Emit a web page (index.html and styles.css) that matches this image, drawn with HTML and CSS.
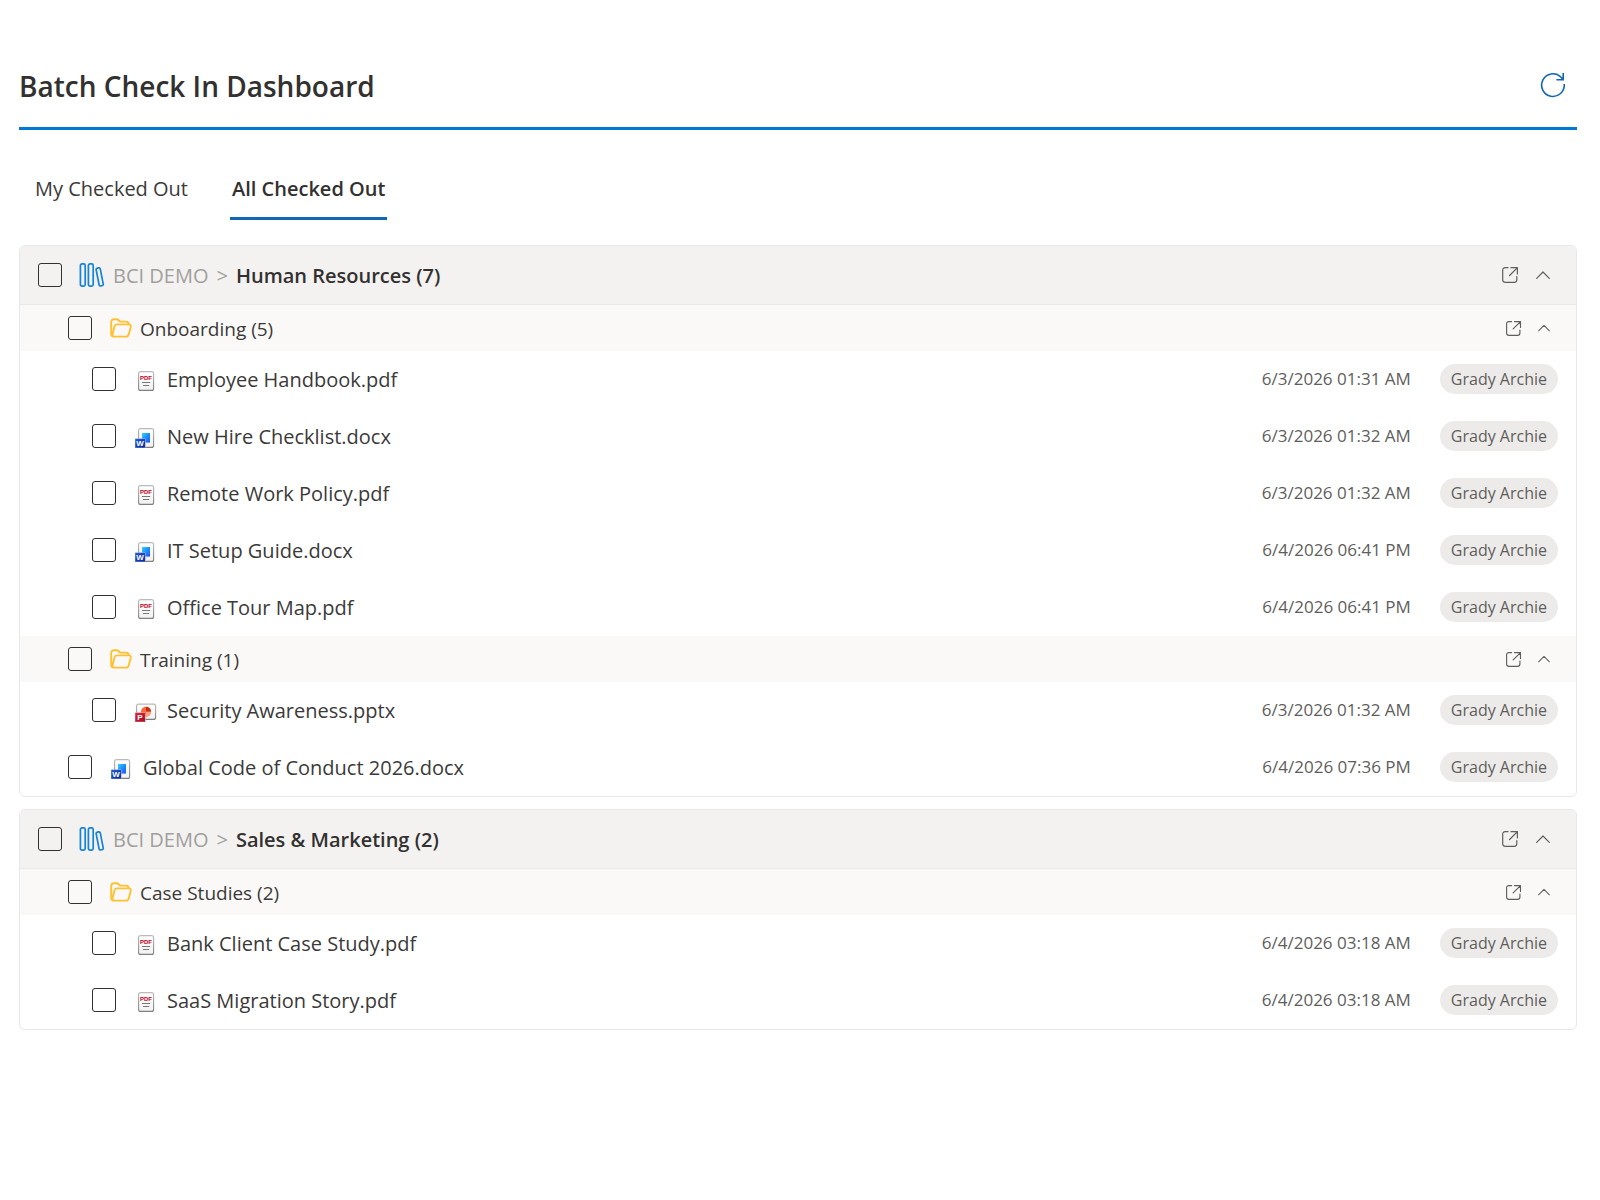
FILE: index.html
```html
<!DOCTYPE html>
<html lang="en">
<head>
<meta charset="utf-8">
<meta name="viewport" content="width=device-width, initial-scale=1">
<title>Batch Check In Dashboard</title>
<link rel="stylesheet" href="styles.css">
</head>
<body>
<svg class="sprite" aria-hidden="true">
  <defs>
    <linearGradient id="paper" x1="0" y1="0" x2="0" y2="1"><stop offset="0" stop-color="#fff"/><stop offset="1" stop-color="#f1f1f1"/></linearGradient>
    <linearGradient id="edge" x1="0" y1="0" x2="0" y2="1"><stop offset="0" stop-color="#bbb"/><stop offset="1" stop-color="#808080"/></linearGradient>
    <linearGradient id="blue" x1="0" y1="0" x2="1" y2="1"><stop offset="0" stop-color="#34d3fb"/><stop offset=".5" stop-color="#1b8ffb"/><stop offset="1" stop-color="#2c50ee"/></linearGradient>
    <linearGradient id="navy" x1="0" y1="0" x2="1" y2="1"><stop offset="0" stop-color="#1c5bd8"/><stop offset="1" stop-color="#0b2593"/></linearGradient>
    <linearGradient id="red" x1="0" y1="0" x2="1" y2="1"><stop offset="0" stop-color="#d9263c"/><stop offset="1" stop-color="#a50b22"/></linearGradient>
  </defs>
  <symbol id="i-library" viewBox="0 0 26 24">
    <g fill="none" stroke="#1683d8" stroke-width="1.7">
      <rect x="1.4" y=".85" width="4.8" height="22.3" rx="1.6"/>
      <rect x="9.4" y=".85" width="4.8" height="22.3" rx="1.6"/>
      <rect x="18.6" y="4.8" width="4.2" height="18.2" rx="1.5" transform="rotate(-11 20.7 13.9)"/>
    </g>
  </symbol>
  <symbol id="i-folder" viewBox="0 0 22 20">
    <path d="M3.5 18.5 Q1.2 18.5 1.2 16 V4 Q1.2 1.2 4 1.2 H6.7 Q7.8 1.2 8.5 2 L10 3.6 H16 Q18.8 3.6 18.8 6.4 M3.5 18.6 H16 Q18.2 18.6 18.7 16.5 L20.7 9 Q21.2 6.4 18.8 6.4 H7 Q5 6.4 4.5 8.3 L2.6 16 Q2.2 18.6 4 18.6" fill="none" stroke="#ffc031" stroke-width="1.9" stroke-linejoin="round"/>
  </symbol>
  <symbol id="i-open" viewBox="0 0 18 18">
    <path d="M7 1.7 H4.2 Q1.7 1.7 1.7 4.2 V13.8 Q1.7 16.3 4.2 16.3 H13.3 Q15.8 16.3 15.8 13.8 V10.6 M10 1.7 H16.4 V8 M16.2 1.9 L8.6 9.5" fill="none" stroke="#605e5c" stroke-width="1.2" stroke-linecap="round" stroke-linejoin="round"/>
  </symbol>
  <symbol id="i-up" viewBox="0 0 14 8">
    <path d="M.7 7.3 L7 1 L13.3 7.3" fill="none" stroke="#605e5c" stroke-width="1.2" stroke-linecap="round" stroke-linejoin="round"/>
  </symbol>
  <symbol id="i-refresh" viewBox="0 0 26 26">
    <path d="M24.2 12 A11.3 11.3 0 1 1 20.8 5 L23 7.4 M23.2 1 V7.7 H16.4" fill="none" stroke="#1267b4" stroke-width="1.6"/>
  </symbol>
  <symbol id="i-pdf" viewBox="0 0 22 20">
    <rect x="3.6" y=".6" width="15" height="18.8" rx="2" fill="url(#paper)" stroke="url(#edge)" stroke-width="1.1"/>
    <path d="M7 11.5 H15.2 M8 14.5 H14.2" stroke="#777" stroke-width="1"/>
  </symbol>
  <symbol id="i-docx" viewBox="0 0 22 20">
    <rect x="3.6" y=".6" width="15" height="18.8" rx="2" fill="url(#paper)" stroke="url(#edge)" stroke-width="1.1"/>
    <rect x="7" y="5" width="8" height="9.6" fill="url(#blue)"/>
    <rect x="0" y="10.6" width="10.4" height="9.4" rx=".6" fill="url(#navy)" stroke="#fff" stroke-width=".4"/>
  </symbol>
  <symbol id="i-pptx" viewBox="0 0 22 20">
    <rect x="1.6" y="2.1" width="19" height="15.3" rx="2" fill="url(#paper)" stroke="url(#edge)" stroke-width="1.1"/>
    <circle cx="11" cy="9.8" r="5" fill="#f9683f"/>
    <path d="M11 9.8 V4.8 A5 5 0 0 1 16 9.8 Z" fill="#c92b17"/>
    <path d="M11 9.8 H16 A5 5 0 0 1 11 14.8 Z" fill="#ffa180"/>
    <rect x="0" y="10.6" width="10.4" height="9.4" rx=".6" fill="url(#red)" stroke="#fff" stroke-width=".4"/>
  </symbol>
</svg>

<main class="page">
  <header class="page-header">
    <h1>Batch Check In Dashboard</h1>
    <button class="icon-btn" type="button" aria-label="Refresh"><svg class="refresh"><use href="#i-refresh"/></svg></button>
  </header>

  <div class="tabs" role="tablist">
    <button class="tab" type="button" role="tab" aria-selected="false">My Checked Out</button>
    <button class="tab tab-active" type="button" role="tab" aria-selected="true">All Checked Out</button>
  </div>

  <section class="card">
    <div class="row library">
      <input type="checkbox" id="hr"><svg class="lib"><use href="#i-library"/></svg>
      <label class="name" for="hr"><span class="site">BCI DEMO</span><span class="sep">&gt;</span><strong>Human Resources (7)</strong></label>
      <button class="icon-btn" type="button" aria-label="Open library"><svg class="open"><use href="#i-open"/></svg></button>
      <button class="icon-btn" type="button" aria-label="Collapse"><svg class="up"><use href="#i-up"/></svg></button>
    </div>
    <div class="row folder">
      <input type="checkbox" id="onb"><svg class="fold"><use href="#i-folder"/></svg>
      <label class="name" for="onb">Onboarding (5)</label>
      <button class="icon-btn" type="button" aria-label="Open folder"><svg class="open"><use href="#i-open"/></svg></button>
      <button class="icon-btn" type="button" aria-label="Collapse"><svg class="up"><use href="#i-up"/></svg></button>
    </div>
    <div class="row file nested">
      <input type="checkbox" id="f1"><svg class="doc" viewBox="0 0 22 20"><use href="#i-pdf"/><text x="11" y="9" class="tiny">PDF</text></svg>
      <label class="name" for="f1">Employee Handbook.pdf</label><time>6/3/2026 01:31 AM</time><span class="person">Grady Archie</span>
    </div>
    <div class="row file nested">
      <input type="checkbox" id="f2"><svg class="doc" viewBox="0 0 22 20"><use href="#i-docx"/><text x="5" y="18" class="badge">W</text></svg>
      <label class="name" for="f2">New Hire Checklist.docx</label><time>6/3/2026 01:32 AM</time><span class="person">Grady Archie</span>
    </div>
    <div class="row file nested">
      <input type="checkbox" id="f3"><svg class="doc" viewBox="0 0 22 20"><use href="#i-pdf"/><text x="11" y="9" class="tiny">PDF</text></svg>
      <label class="name" for="f3">Remote Work Policy.pdf</label><time>6/3/2026 01:32 AM</time><span class="person">Grady Archie</span>
    </div>
    <div class="row file nested">
      <input type="checkbox" id="f4"><svg class="doc" viewBox="0 0 22 20"><use href="#i-docx"/><text x="5" y="18" class="badge">W</text></svg>
      <label class="name" for="f4">IT Setup Guide.docx</label><time>6/4/2026 06:41 PM</time><span class="person">Grady Archie</span>
    </div>
    <div class="row file nested">
      <input type="checkbox" id="f5"><svg class="doc" viewBox="0 0 22 20"><use href="#i-pdf"/><text x="11" y="9" class="tiny">PDF</text></svg>
      <label class="name" for="f5">Office Tour Map.pdf</label><time>6/4/2026 06:41 PM</time><span class="person">Grady Archie</span>
    </div>
    <div class="row folder">
      <input type="checkbox" id="trn"><svg class="fold"><use href="#i-folder"/></svg>
      <label class="name" for="trn">Training (1)</label>
      <button class="icon-btn" type="button" aria-label="Open folder"><svg class="open"><use href="#i-open"/></svg></button>
      <button class="icon-btn" type="button" aria-label="Collapse"><svg class="up"><use href="#i-up"/></svg></button>
    </div>
    <div class="row file nested">
      <input type="checkbox" id="f6"><svg class="doc" viewBox="0 0 22 20"><use href="#i-pptx"/><text x="5" y="18" class="badge">P</text></svg>
      <label class="name" for="f6">Security Awareness.pptx</label><time>6/3/2026 01:32 AM</time><span class="person">Grady Archie</span>
    </div>
    <div class="row file">
      <input type="checkbox" id="f7"><svg class="doc" viewBox="0 0 22 20"><use href="#i-docx"/><text x="5" y="18" class="badge">W</text></svg>
      <label class="name" for="f7">Global Code of Conduct 2026.docx</label><time>6/4/2026 07:36 PM</time><span class="person">Grady Archie</span>
    </div>
  </section>

  <section class="card">
    <div class="row library">
      <input type="checkbox" id="sm"><svg class="lib"><use href="#i-library"/></svg>
      <label class="name" for="sm"><span class="site">BCI DEMO</span><span class="sep">&gt;</span><strong>Sales &amp; Marketing (2)</strong></label>
      <button class="icon-btn" type="button" aria-label="Open library"><svg class="open"><use href="#i-open"/></svg></button>
      <button class="icon-btn" type="button" aria-label="Collapse"><svg class="up"><use href="#i-up"/></svg></button>
    </div>
    <div class="row folder">
      <input type="checkbox" id="cs"><svg class="fold"><use href="#i-folder"/></svg>
      <label class="name" for="cs">Case Studies (2)</label>
      <button class="icon-btn" type="button" aria-label="Open folder"><svg class="open"><use href="#i-open"/></svg></button>
      <button class="icon-btn" type="button" aria-label="Collapse"><svg class="up"><use href="#i-up"/></svg></button>
    </div>
    <div class="row file nested">
      <input type="checkbox" id="f8"><svg class="doc" viewBox="0 0 22 20"><use href="#i-pdf"/><text x="11" y="9" class="tiny">PDF</text></svg>
      <label class="name" for="f8">Bank Client Case Study.pdf</label><time>6/4/2026 03:18 AM</time><span class="person">Grady Archie</span>
    </div>
    <div class="row file nested">
      <input type="checkbox" id="f9"><svg class="doc" viewBox="0 0 22 20"><use href="#i-pdf"/><text x="11" y="9" class="tiny">PDF</text></svg>
      <label class="name" for="f9">SaaS Migration Story.pdf</label><time>6/4/2026 03:18 AM</time><span class="person">Grady Archie</span>
    </div>
  </section>
</main>
</body>
</html>
```
FILE: styles.css
```css
* { box-sizing: border-box; }

body {
  margin: 0;
  background: #fff;
  color: #3b3a39;
  font-family: "Segoe UI", "Open Sans", "Noto Sans", sans-serif;
  font-size: 20px;
  line-height: 28px;
}

.sprite { position: absolute; width: 0; height: 0; }
.tiny, .badge { font-family: "Liberation Sans", sans-serif; font-weight: 700; text-anchor: middle; }
.tiny { font-size: 6px; fill: #c4001c; }
.badge { font-size: 8px; fill: #fff; }

svg { display: block; flex: none; }
button { border: 0; padding: 0; background: none; color: inherit; font: inherit; cursor: pointer; }
.icon-btn { display: flex; flex: none; }

.page { padding: 58px 23px 40px 19px; }

.page-header {
  display: flex;
  align-items: center;
  justify-content: space-between;
  height: 72px;
  padding: 0 11px 16px 0;
  border-bottom: 3px solid #0078d4;
}
h1 { margin: 0; padding-top: 2px; color: #323130; font-size: 28px; line-height: 40px; font-weight: 600; }
.refresh { width: 26px; height: 26px; }

.tabs { display: flex; gap: 40px; margin-top: 36px; padding: 0 14px; }
.tab { padding: 9px 2px 14px; border-bottom: 3px solid transparent; }
.tab-active { color: #323130; font-weight: 600; border-color: #1267b4; }

.card {
  margin-top: 25px;
  border: 1px solid #e8e8e8;
  border-radius: 6px;
  overflow: hidden;
}
.card + .card { margin-top: 12px; }

.row { display: flex; align-items: center; padding-right: 18px; }
.row .name { flex: 1; padding-top: 2px; }

input[type="checkbox"] {
  appearance: none;
  flex: none;
  width: 24px;
  height: 24px;
  margin: 0;
  border: 1px solid #323130;
  border-radius: 3px;
  background: transparent;
}

.library {
  height: 59px;
  padding-left: 18px;
  padding-right: 26px;
  background: #f3f2f1;
  border-bottom: 1px solid #e8e8e8;
}
.lib { width: 26px; height: 24px; margin: 0 8px 0 17px; }
.site, .sep { color: #a19f9d; }
.sep { margin: 0 8px; }
.library strong { color: #323130; font-weight: 600; }
.open { width: 18px; height: 18px; margin-right: 17px; }
.up { width: 14px; height: 8px; }

.folder { height: 46px; padding-left: 48px; padding-right: 26px; background: #faf9f8; font-size: 19px; }
.fold { width: 22px; height: 20px; margin: 0 8px 0 18px; }
.folder .open { width: 17px; height: 17px; margin-right: 16px; }
.folder .up { width: 12px; height: 8px; }

.file { height: 57px; padding-left: 48px; padding-bottom: 1px; }
.nested { padding-left: 72px; }
.doc { width: 22px; height: 20px; margin: 4px 10px 0 19px; }

time { color: #605e5c; font-size: 17px; margin-right: 29px; }
.person {
  padding: 0 11px;
  border-radius: 15px;
  background: #edebe9;
  color: #605e5c;
  font-size: 16px;
  line-height: 30px;
}
```
